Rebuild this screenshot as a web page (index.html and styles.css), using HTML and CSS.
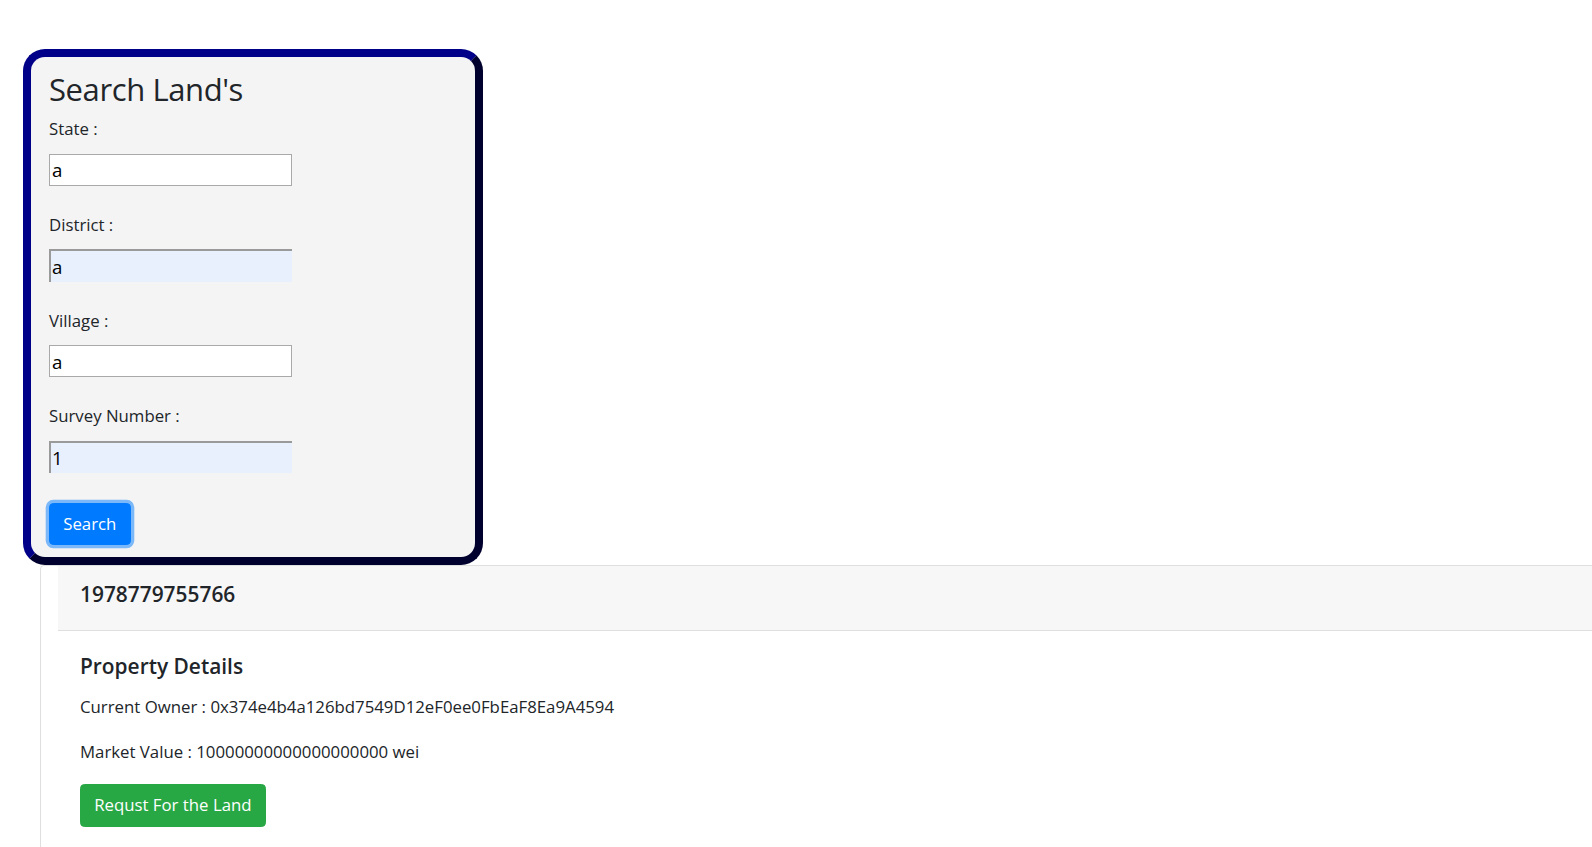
FILE: index.html
```html
<!DOCTYPE html>
<html lang="en">
<head>
<meta charset="utf-8">
<title>Search Land's</title>
<link rel="stylesheet" href="styles.css">
</head>
<body>
<div class="page">
  <section class="search-box">
    <h2 class="search-title">Search Land's</h2>
    <form class="search-form">
      <div class="field">
        <label class="field-label">State :</label>
        <input class="field-input" type="text" value="a">
      </div>
      <div class="field">
        <label class="field-label">District :</label>
        <input class="field-input field-input--filled" type="text" value="a">
      </div>
      <div class="field">
        <label class="field-label">Village :</label>
        <input class="field-input" type="text" value="a">
      </div>
      <div class="field">
        <label class="field-label">Survey Number :</label>
        <input class="field-input field-input--filled" type="text" value="1">
      </div>
      <button class="btn btn-primary btn-focus" type="button">Search</button>
    </form>
  </section>

  <section class="result-card">
    <div class="result-inner">
      <div class="card-header">
        <h5 class="card-heading">1978779755766</h5>
      </div>
      <div class="card-body">
        <h5 class="card-heading card-heading--body">Property Details</h5>
        <p class="card-text">Current Owner : 0x374e4b4a126bd7549D12eF0ee0FbEaF8Ea9A4594</p>
        <p class="card-text card-text--last">Market Value : 10000000000000000000 wei</p>
        <button class="btn btn-success" type="button">Requst For the Land</button>
      </div>
    </div>
  </section>
</div>
</body>
</html>
```

FILE: styles.css
```css
html {
  overflow: hidden;
}

body {
  margin: 0;
  background: #ffffff;
  color: #212529;
  font-family: "Open Sans", "Noto Sans", sans-serif;
  font-size: 16.8px;
  line-height: 26.4px;
}

.page {
  width: 1700px;
  padding-top: 49px;
}

.search-box {
  box-sizing: border-box;
  width: 460px;
  margin-left: 23px;
  padding: 10.9px 18px 12.1px 18px;
  background: #f4f4f4;
  border: 8px solid;
  border-color: #000088 #00002e #00002e #000088;
  border-radius: 22px;
}

.search-title {
  margin: 0 0 6.2px 0;
  font-size: 31px;
  line-height: 42.24px;
  font-weight: 400;
  letter-spacing: -0.4px;
}

.search-form {
  display: flex;
  flex-direction: column;
  align-items: flex-start;
}

.field {
  display: flex;
  flex-direction: column;
  align-items: flex-start;
  margin-bottom: 26.2px;
}

.field:nth-child(4) {
  margin-bottom: 30.4px;
}

.field-label {
  display: block;
  line-height: 26.4px;
  margin-bottom: 10.8px;
}

.field-input {
  box-sizing: border-box;
  width: 243px;
  height: 32.3px;
  margin: 0;
  padding: 0 2px;
  background: #ffffff;
  border: 1px solid #a9a9a9;
  border-radius: 0;
  color: #000000;
  font-family: "Open Sans", "Noto Sans", sans-serif;
  font-size: 18.7px;
  outline: none;
}

.field-input--filled {
  background: #e8f0fe;
  border-width: 2px 0 0 2px;
  border-color: #9a9a9a;
  padding-left: 1px;
}

.btn {
  display: inline-block;
  margin: 0;
  border: 1px solid transparent;
  border-radius: 4.4px;
  color: #ffffff;
  font-family: "Open Sans", "Noto Sans", sans-serif;
  font-size: 16.8px;
  line-height: 26.4px;
  padding: 6.6px 13.2px;
  cursor: pointer;
}

.btn-primary {
  background: #007bff;
  border-color: #007bff;
}

.btn-focus {
  box-shadow: 0 0 0 3.3px rgba(0, 123, 255, 0.5);
}

.btn-success {
  background: #28a745;
  border-color: #28a745;
  padding: 7.3px 13.2px;
}

.result-card {
  border: 1px solid #dfdfdf;
  border-right: none;
  border-radius: 4.4px 0 0 4.4px;
  margin-left: 40px;
  background: #ffffff;
}

.result-inner {
  margin-left: 17px;
}

.card-header {
  background: #f7f7f7;
  border-bottom: 1px solid #dfdfdf;
  padding: 15px 22px 22.6px 22px;
}

.card-heading {
  margin: 0;
  font-size: 20.9px;
  line-height: 26.4px;
  font-weight: 600;
}

.card-heading--body {
  margin-bottom: 14.5px;
}

.card-body {
  padding: 22.3px 22px 40px 22px;
}

.card-text {
  margin: 0 0 18.9px 0;
}

.card-text--last {
  margin-bottom: 18px;
}
```
